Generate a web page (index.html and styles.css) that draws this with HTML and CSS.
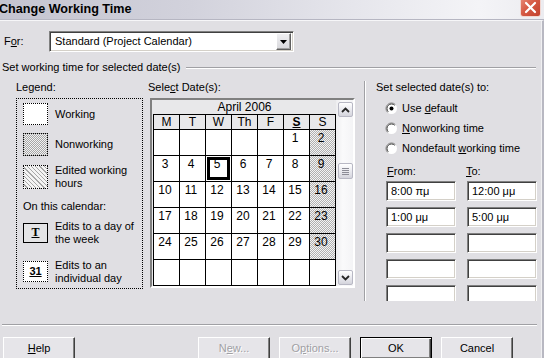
FILE: index.html
```html
<!DOCTYPE html>
<html>
<head>
<meta charset="utf-8">
<title>Change Working Time</title>
<link rel="stylesheet" href="styles.css">
</head>
<body>
<div class="window">
  <div class="titlebar">
    <span class="title">Change Working Time</span>
    <span class="close">
      <svg width="19" height="19" viewBox="0 0 19 19"><path d="M5 5 L14 14 M14 5 L5 14" stroke="#fff" stroke-width="2.2" stroke-linecap="round"/></svg>
    </span>
  </div>
  <div class="dialog">
    <div class="for-row">
      <span class="for-label">F<u>o</u>r:</span>
      <div class="combo">
        <span class="combo-text">Standard (Project Calendar)</span>
        <span class="combo-btn"><svg width="7" height="4" viewBox="0 0 7 4"><path d="M0 0 H7 L3.5 4 Z" fill="#000"/></svg></span>
      </div>
    </div>
    <div class="group-title">
      <span>Set working time for selected date(s)</span>
      <span class="group-line"></span>
    </div>
    <div class="main">
      <div class="legend-col">
        <div class="label">Legend:</div>
        <div class="legend-box">
          <div class="legend-item item-working"><span class="swatch sw-working"></span><span class="item-text">Working</span></div>
          <div class="legend-item item-non"><span class="swatch sw-non"></span><span class="item-text">Nonworking</span></div>
          <div class="legend-item item-edited"><span class="swatch sw-edited"></span><span class="item-text">Edited working<br>hours</span></div>
          <div class="on-cal">On this calendar:</div>
          <div class="legend-item item-week"><span class="swatch sw-week"><u>T</u></span><span class="item-text">Edits to a day of<br>the week</span></div>
          <div class="legend-item item-day"><span class="swatch sw-day"><u>31</u></span><span class="item-text">Edits to an<br>individual day</span></div>
        </div>
      </div>
      <div class="cal-col">
        <div class="label">Sele<u>c</u>t Date(s):</div>
        <div class="calendar">
          <div class="cal-main">
            <div class="month">April 2006</div>
            <div class="grid">
              <div class="hd">M</div><div class="hd">T</div><div class="hd">W</div><div class="hd">Th</div><div class="hd">F</div><div class="hd hd-sat"><u>S</u></div><div class="hd">S</div>
              <div class="c"></div><div class="c"></div><div class="c"></div><div class="c"></div><div class="c"></div><div class="c">1</div><div class="c sun">2</div>
              <div class="c">3</div><div class="c">4</div><div class="c sel">5</div><div class="c">6</div><div class="c">7</div><div class="c">8</div><div class="c sun">9</div>
              <div class="c">10</div><div class="c">11</div><div class="c">12</div><div class="c">13</div><div class="c">14</div><div class="c">15</div><div class="c sun">16</div>
              <div class="c">17</div><div class="c">18</div><div class="c">19</div><div class="c">20</div><div class="c">21</div><div class="c">22</div><div class="c sun">23</div>
              <div class="c">24</div><div class="c">25</div><div class="c">26</div><div class="c">27</div><div class="c">28</div><div class="c">29</div><div class="c sun">30</div>
              <div class="c"></div><div class="c"></div><div class="c"></div><div class="c"></div><div class="c"></div><div class="c"></div><div class="c"></div>
            </div>
          </div>
          <div class="scrollbar">
            <div class="sb-btn sb-up"><svg width="9" height="6" viewBox="0 0 9 6"><path d="M1 5 L4.5 1.5 L8 5" stroke="#262626" stroke-width="1.8" fill="none"/></svg></div>
            <div class="sb-space sb-space-top"></div>
            <div class="sb-btn sb-thumb"><svg width="7" height="7" viewBox="0 0 7 7"><path d="M0 0.5 H7 M0 2.5 H7 M0 4.5 H7 M0 6.5 H7" stroke="#8c8c96" stroke-width="1"/></svg></div>
            <div class="sb-space"></div>
            <div class="sb-btn sb-down"><svg width="9" height="6" viewBox="0 0 9 6"><path d="M1 1 L4.5 4.5 L8 1" stroke="#262626" stroke-width="1.8" fill="none"/></svg></div>
          </div>
        </div>
      </div>
      <div class="vsep"></div>
      <div class="right-col">
        <div class="label">Set selected date(s) to:</div>
        <div class="radios">
          <div class="radio-row">
            <svg class="radio" width="13" height="13" viewBox="0 0 13 13"><circle cx="6.5" cy="6.5" r="5.5" fill="#fff"/><path d="M10.4 2.6 A5.5 5.5 0 0 0 2.6 10.4" stroke="#808080" fill="none"/><path d="M9.7 3.3 A4.5 4.5 0 0 0 3.3 9.7" stroke="#404040" fill="none"/><circle cx="6.5" cy="6.5" r="2" fill="#000"/></svg>
            <span>Use <u>d</u>efault</span>
          </div>
          <div class="radio-row">
            <svg class="radio" width="13" height="13" viewBox="0 0 13 13"><circle cx="6.5" cy="6.5" r="5.5" fill="#fff"/><path d="M10.4 2.6 A5.5 5.5 0 0 0 2.6 10.4" stroke="#808080" fill="none"/><path d="M9.7 3.3 A4.5 4.5 0 0 0 3.3 9.7" stroke="#404040" fill="none"/></svg>
            <span><u>N</u>onworking time</span>
          </div>
          <div class="radio-row">
            <svg class="radio" width="13" height="13" viewBox="0 0 13 13"><circle cx="6.5" cy="6.5" r="5.5" fill="#fff"/><path d="M10.4 2.6 A5.5 5.5 0 0 0 2.6 10.4" stroke="#808080" fill="none"/><path d="M9.7 3.3 A4.5 4.5 0 0 0 3.3 9.7" stroke="#404040" fill="none"/></svg>
            <span>Nondefault <u>w</u>orking time</span>
          </div>
        </div>
        <div class="times">
          <div class="time-label"><u>F</u>rom:</div>
          <div class="time-label to-label"><u>T</u>o:</div>
          <div class="tbox">8:00 πμ</div>
          <div class="tbox">12:00 μμ</div>
          <div class="tbox">1:00 μμ</div>
          <div class="tbox">5:00 μμ</div>
          <div class="tbox"></div>
          <div class="tbox"></div>
          <div class="tbox"></div>
          <div class="tbox"></div>
          <div class="tbox"></div>
          <div class="tbox"></div>
        </div>
      </div>
    </div>
    <div class="hsep"></div>
    <div class="buttons">
      <div class="btn btn-help"><span><u>H</u>elp</span></div>
      <div class="btn-group">
        <div class="btn disabled"><span>N<u>e</u>w...</span></div>
        <div class="btn disabled"><span>O<u>p</u>tions...</span></div>
        <div class="btn default"><span>OK</span></div>
        <div class="btn"><span>Cancel</span></div>
      </div>
    </div>
  </div>
</div>
</body>
</html>
```

FILE: styles.css
```css
* { box-sizing: border-box; }
html, body { margin: 0; padding: 0; }
body {
  width: 544px;
  height: 358px;
  overflow: hidden;
  font-family: "Liberation Sans", Arial, sans-serif;
  font-size: 11px;
  line-height: 13px;
  color: #000;
  background: #e0dfe3;
}
u { text-decoration: underline; text-underline-offset: 1px; }

.window {
  width: 544px;
  height: 358px;
  display: flex;
  flex-direction: column;
  overflow: hidden;
}

/* title bar */
.titlebar {
  flex: none;
  height: 20px;
  display: flex;
  align-items: flex-start;
  justify-content: space-between;
  background: linear-gradient(to right, #c4c4d0 0%, #d2d2dc 35%, #e6e6ec 65%, #f4f4f7 88%, #ececf0 100%);
  border-bottom: 1px solid #b6b6c2;
}
.title {
  font-weight: bold;
  font-size: 12.6px;
  line-height: 18px;
  margin-left: -1px;
  color: #000;
}
.close {
  width: 21px;
  height: 20px;
  margin-top: -3px;
  margin-right: 3px;
  border-radius: 3px;
  border: 1px solid #f2d6d0;
  background: linear-gradient(135deg, #e88a78 0%, #d65a44 45%, #c2402c 100%);
  display: flex;
  align-items: center;
  justify-content: center;
}

/* dialog */
.dialog {
  flex: 1;
  display: flex;
  flex-direction: column;
  border-top: 1px solid #f6f6f8;
  border-right: 2px solid #b8b8c2;
  box-shadow: inset -1px 0 #f0f0f2;
}

.for-row {
  display: flex;
  align-items: center;
  height: 21px;
  margin-top: 10px;
}
.for-label {
  width: 49px;
  padding-left: 4px;
}
.combo {
  width: 245px;
  height: 21px;
  display: flex;
  align-items: center;
  justify-content: space-between;
  background: #fff;
  border: 1px solid;
  border-color: #808080 #fff #fff #808080;
  box-shadow: inset 1px 1px #404040, inset -1px -1px #d4d0c8;
  padding: 2px 2px 2px 5px;
}
.combo-btn {
  width: 15px;
  height: 17px;
  display: flex;
  align-items: center;
  justify-content: center;
  background: linear-gradient(#f0f0f2, #d8d8dc);
  border: 1px solid;
  border-color: #fff #606060 #606060 #fff;
  box-shadow: inset -1px -1px #a0a0a0;
}

.group-title {
  display: flex;
  align-items: center;
  height: 13px;
  margin-top: 9px;
  padding-left: 2px;
  padding-right: 6px;
}
.group-line {
  flex: 1;
  margin-left: 5px;
  height: 2px;
  border-top: 1px solid #a0a0a4;
  border-bottom: 1px solid #fff;
}

.main {
  display: flex;
  height: 220px;
  margin-top: 7px;
}
.label { height: 13px; }

.legend-col {
  width: 127px;
  margin-left: 16px;
  flex: none;
}
.legend-box {
  margin-top: 4px;
  height: 191px;
  border: 1px dotted #000;
  padding-left: 6px;
  display: flex;
  flex-direction: column;
}
.legend-item {
  display: flex;
  align-items: center;
}
.item-working { margin-top: 4px; }
.item-non { margin-top: 8px; }
.item-edited { margin-top: 8px; }
.item-week { margin-top: 7px; }
.item-day { margin-top: 14px; }
.item-text {
  margin-left: 7px;
  line-height: 12.5px;
}
.on-cal { margin-top: 11px; }
.swatch {
  flex: none;
  width: 25px;
  height: 22px;
  border: 1px dotted #000;
  display: flex;
  align-items: center;
  justify-content: center;
}
.sw-working { background: #fff; }
.sw-non {
  height: 23px;
  background: repeating-conic-gradient(#a6a6a6 0 25%, #f2f2f2 0 50%) 0 0 / 2px 2px;
}
.sw-edited {
  height: 24px;
  background: repeating-linear-gradient(45deg, #f4f4f4 0 2px, #a8a8a8 2px 3px);
}
.sw-week {
  height: 20px;
  border: 1px solid #000;
  background: #e4e4e6;
  font-family: "Liberation Serif", serif;
  font-weight: bold;
  font-size: 12px;
}
.sw-day {
  height: 21px;
  background: #fff;
  font-weight: bold;
  font-size: 11px;
}

/* calendar */
.cal-col {
  flex: none;
  margin-left: 5px;
  width: 207px;
}
.calendar {
  margin-top: 4px;
  margin-left: 2px;
  width: 205px;
  height: 190px;
  display: flex;
  border: 2px solid;
  border-color: #808080 #fff #fff #808080;
  box-shadow: inset 1px 1px #404040;
}
.cal-main {
  width: 184px;
  padding-left: 1px;
  background: #e8e8ea;
  overflow: hidden;
}
.month {
  height: 14px;
  line-height: 14px;
  text-align: center;
  font-size: 12px;
  padding-left: 0;
}
.grid {
  display: grid;
  grid-template-columns: repeat(7, 25px);
  grid-template-rows: 14px repeat(6, 25px);
  gap: 1px;
  background: #000;
  border: 1px solid #000;
  width: 183px;
  font-size: 12px;
}
.hd {
  background: #e8e8ea;
  text-align: center;
  line-height: 14px;
}
.hd-sat { font-weight: bold; }
.c {
  background: #fff;
  text-align: center;
  padding-right: 3px;
  padding-top: 1px;
  line-height: 14px;
}
.c.sun {
  background: repeating-conic-gradient(#b0b0b0 0 25%, #f4f4f4 0 50%) 0 0 / 2px 2px;
}
.c.sel {
  box-shadow: inset 0 0 0 1px #fff, inset 0 0 0 4px #000;
}

.scrollbar {
  width: 17px;
  display: flex;
  flex-direction: column;
  align-items: center;
  padding: 2px 0 1px 1px;
  background: linear-gradient(to right, #eeeef0, #fafafb 40%, #f4f4f6);
}
.sb-btn {
  width: 15px;
  height: 15px;
  flex: none;
  display: flex;
  align-items: center;
  justify-content: center;
  border: 1px solid #b8b8c4;
  border-radius: 2px;
  background: linear-gradient(#ffffff, #e6e6ec 60%, #d4d4dc);
}
.sb-space { flex: 1; }
.sb-space-top { flex: none; height: 46px; }
.sb-thumb { height: 16px; }

.vsep {
  flex: none;
  margin-left: 9px;
  width: 2px;
  border-left: 1px solid #a0a0a4;
  border-right: 1px solid #fff;
}

.right-col {
  flex: 1;
  padding-left: 10px;
  overflow: hidden;
}
.radios {
  margin-top: 4px;
  padding-left: 10px;
}
.radio-row {
  height: 20px;
  display: flex;
  align-items: center;
}
.radio { margin-right: 4px; margin-left: -1px; }

.times {
  margin-top: 6px;
  padding-left: 10px;
  display: grid;
  grid-template-columns: 70px 70px;
  column-gap: 11px;
  row-gap: 6px;
}
.time-label {
  height: 14px;
  line-height: 14px;
  margin-bottom: -3px;
  padding-left: 1px;
}
.to-label { margin-left: -2px; }
.tbox {
  height: 20px;
  background: #fff;
  border: 1px solid;
  border-color: #808080 #fff #fff #808080;
  box-shadow: inset 1px 1px #404040, inset -1px -1px #d4d0c8;
  padding-left: 4px;
  line-height: 18px;
}

.hsep {
  margin-top: 23px;
  margin-left: 2px;
  margin-right: 5px;
  height: 2px;
  border-top: 1px solid #a0a0a4;
  border-bottom: 1px solid #fff;
}

.buttons {
  display: flex;
  margin-top: 11px;
  padding-left: 3px;
}
.btn-group {
  display: flex;
  gap: 9px;
  margin-left: 123px;
}
.btn {
  width: 72px;
  height: 23px;
  flex: none;
  display: flex;
  align-items: center;
  justify-content: center;
  background: #e6e5e9;
  border: 1px solid;
  border-color: #fff #404040 #404040 #fff;
  box-shadow: inset -1px -1px #808080;
}
.btn.default {
  border: 1px solid #000;
  box-shadow: inset 1px 1px #fff, inset -1px -1px #404040, inset -2px -2px #808080;
}
.btn.disabled {
  color: #a0a0a4;
  text-shadow: 1px 1px #fff;
}
```
